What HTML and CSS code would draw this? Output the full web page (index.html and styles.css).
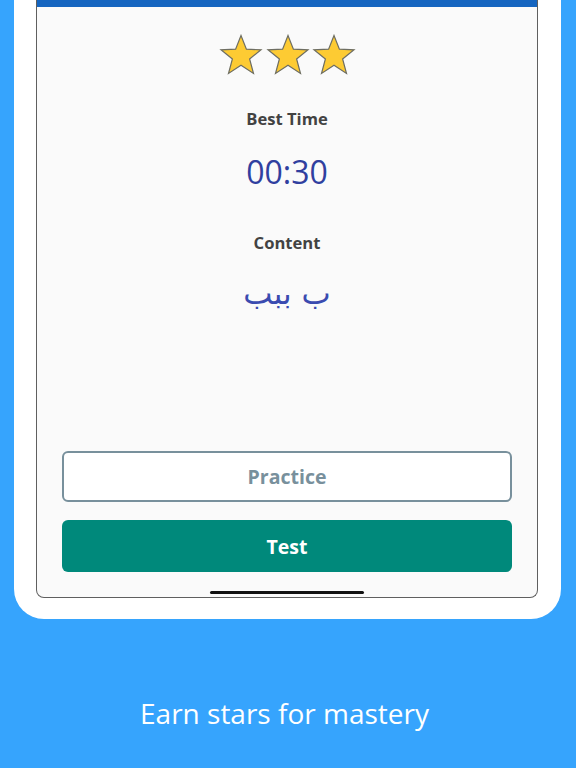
FILE: index.html
```html
<!DOCTYPE html>
<html lang="en">
<head>
<meta charset="utf-8">
<title>Earn stars for mastery</title>
<link rel="stylesheet" href="styles.css">
</head>
<body>
<div class="device">
  <div class="screen">
    <div class="topbar"></div>
    <div class="stars">
      <svg class="star" viewBox="0 0 44 42" width="44" height="42"><polygon points="22,1.5 27.4,15.2 42,15.8 30.6,25 34.5,39.5 22,31.3 9.5,39.5 13.4,25 2,15.8 16.6,15.2"/></svg>
      <svg class="star" viewBox="0 0 44 42" width="44" height="42"><polygon points="22,1.5 27.4,15.2 42,15.8 30.6,25 34.5,39.5 22,31.3 9.5,39.5 13.4,25 2,15.8 16.6,15.2"/></svg>
      <svg class="star" viewBox="0 0 44 42" width="44" height="42"><polygon points="22,1.5 27.4,15.2 42,15.8 30.6,25 34.5,39.5 22,31.3 9.5,39.5 13.4,25 2,15.8 16.6,15.2"/></svg>
    </div>
    <div class="label label-time">Best Time</div>
    <div class="time">00:30</div>
    <div class="label label-content">Content</div>
    <div class="arabic" lang="ar" dir="rtl">ب ببب</div>
    <div class="actions">
      <button class="btn btn-practice">Practice</button>
      <button class="btn btn-test">Test</button>
    </div>
    <div class="home-indicator"></div>
  </div>
</div>
<div class="caption">Earn stars for mastery</div>
</body>
</html>
```
FILE: styles.css
```css
html, body {
  margin: 0;
  padding: 0;
}
body {
  width: 576px;
  height: 768px;
  background: #36a4fd;
  font-family: "Open Sans", "Noto Sans", sans-serif;
  overflow: hidden;
}
.device {
  margin: 0 15px 0 14px;
  background: #ffffff;
  border-radius: 0 0 30px 30px;
  padding: 0 23px 21px 22px;
}
.screen {
  height: 597px;
  background: #fafafa;
  border: 1px solid #5f5f5f;
  border-top: none;
  border-radius: 0 0 8px 8px;
  display: flex;
  flex-direction: column;
  align-items: center;
}
.topbar {
  align-self: stretch;
  height: 7px;
  background: #1565c0;
}
.stars {
  margin-top: 27px;
  display: flex;
  gap: 2.5px;
  margin-left: 1px;
}
.star {
  display: block;
}
.star polygon {
  fill: #fdcb33;
  stroke: #6e6e62;
  stroke-width: 1.2;
  stroke-linejoin: miter;
}
.label {
  font-size: 16.6px;
  line-height: 22px;
  font-weight: 700;
  color: #424242;
}
.label-time {
  margin-top: 32px;
}
.time {
  margin-top: 22px;
  font-size: 32px;
  line-height: 40px;
  color: #303f9f;
}
.label-content {
  margin-top: 40px;
}
.arabic {
  margin-top: 19px;
  font-family: "DejaVu Sans", sans-serif;
  font-size: 31px;
  line-height: 40px;
  color: #3a4bb0;
}
.actions {
  margin-top: auto;
  align-self: stretch;
  padding: 0 25px;
  display: flex;
  flex-direction: column;
  gap: 18px;
}
.btn {
  display: block;
  width: 100%;
  font-family: "Open Sans", "Noto Sans", sans-serif;
  font-size: 19.5px;
  font-weight: 700;
  border-radius: 6px;
  cursor: pointer;
  padding: 0;
}
.btn-practice {
  height: 51px;
  background: #ffffff;
  border: 2px solid #78909c;
  color: #78909c;
}
.btn-test {
  height: 52px;
  background: #00897b;
  border: none;
  color: #ffffff;
}
.home-indicator {
  margin-top: 19px;
  margin-bottom: 3px;
  width: 154px;
  height: 3px;
  border-radius: 2px;
  background: #111111;
}
.caption {
  margin-top: 76px;
  padding-right: 7px;
  text-align: center;
  color: #ffffff;
  font-size: 28px;
  line-height: 36px;
}
```
